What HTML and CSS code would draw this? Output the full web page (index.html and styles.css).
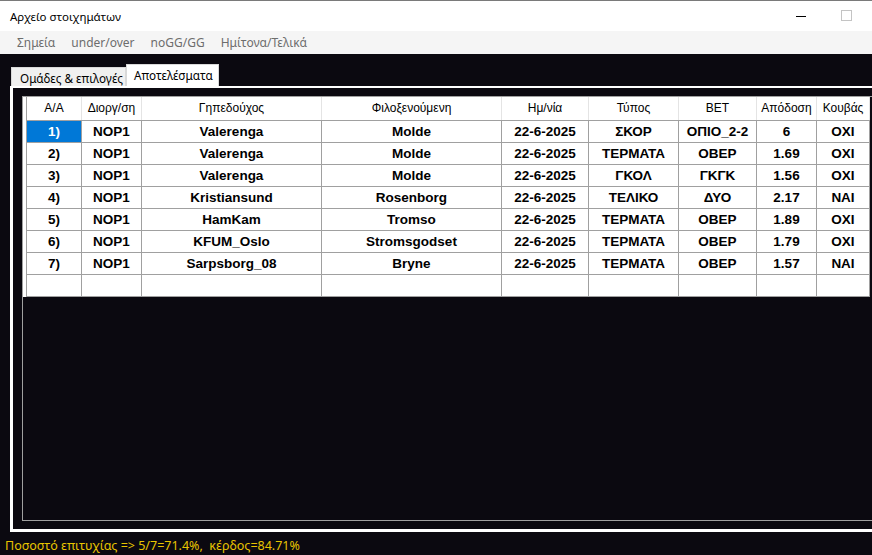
FILE: index.html
```html
<html>

<head>
    <meta http-equiv="Content-Type" content="text/html; charset=UTF-8">
    <title>Αρχείο στοιχημάτων</title>
    <link rel="stylesheet" href="styles.css">
</head>
<body>
    <div class="titlebar">
        <span class="title">Αρχείο στοιχημάτων</span>
        <span class="btn-min"></span>
        <span class="btn-max"></span>
    </div>
    <div class="menubar">
        <span class="menu-item">Σημεία</span>
        <span class="menu-item">under/over</span>
        <span class="menu-item">noGG/GG</span>
        <span class="menu-item">Ημίτονα/Τελικά</span>
    </div>
    <div class="client">
        <div class="tabs">
            <div class="tab">Ομάδες &amp; επιλογές</div>
            <div class="tab tab-active">Αποτελέσματα</div>
        </div>
        <div class="panel">
            <div class="grid">
                <table class="results">
                    <colgroup>
                        <col style="width:55px">
                        <col style="width:60px">
                        <col style="width:180px">
                        <col style="width:180px">
                        <col style="width:87px">
                        <col style="width:90px">
                        <col style="width:78px">
                        <col style="width:60px">
                        <col style="width:53px">
                    </colgroup>
                    <thead>
                        <tr>
                            <th>A/A</th>
                            <th>Διοργ/ση</th>
                            <th>Γηπεδούχος</th>
                            <th>Φιλοξενούμενη</th>
                            <th>Ημ/νία</th>
                            <th>Τύπος</th>
                            <th>BET</th>
                            <th>Απόδοση</th>
                            <th>Κουβάς</th>
                        </tr>
                    </thead>
                    <tbody>
                        <tr>
                            <td class="selected">1)</td><td>NOP1</td><td>Valerenga</td><td>Molde</td><td>22-6-2025</td><td>ΣΚΟΡ</td><td>ΟΠΙΟ_2-2</td><td>6</td><td>ΟΧΙ</td>
                        </tr>
                        <tr>
                            <td>2)</td><td>NOP1</td><td>Valerenga</td><td>Molde</td><td>22-6-2025</td><td>ΤΕΡΜΑΤΑ</td><td>ΟΒΕΡ</td><td>1.69</td><td>ΟΧΙ</td>
                        </tr>
                        <tr>
                            <td>3)</td><td>NOP1</td><td>Valerenga</td><td>Molde</td><td>22-6-2025</td><td>ΓΚΟΛ</td><td>ΓΚΓΚ</td><td>1.56</td><td>ΟΧΙ</td>
                        </tr>
                        <tr>
                            <td>4)</td><td>NOP1</td><td>Kristiansund</td><td>Rosenborg</td><td>22-6-2025</td><td>ΤΕΛΙΚΟ</td><td>ΔΥΟ</td><td>2.17</td><td>ΝΑΙ</td>
                        </tr>
                        <tr>
                            <td>5)</td><td>NOP1</td><td>HamKam</td><td>Tromso</td><td>22-6-2025</td><td>ΤΕΡΜΑΤΑ</td><td>ΟΒΕΡ</td><td>1.89</td><td>ΟΧΙ</td>
                        </tr>
                        <tr>
                            <td>6)</td><td>NOP1</td><td>KFUM_Oslo</td><td>Stromsgodset</td><td>22-6-2025</td><td>ΤΕΡΜΑΤΑ</td><td>ΟΒΕΡ</td><td>1.79</td><td>ΟΧΙ</td>
                        </tr>
                        <tr>
                            <td>7)</td><td>NOP1</td><td>Sarpsborg_08</td><td>Bryne</td><td>22-6-2025</td><td>ΤΕΡΜΑΤΑ</td><td>ΟΒΕΡ</td><td>1.57</td><td>ΝΑΙ</td>
                        </tr>
                        <tr>
                            <td></td><td></td><td></td><td></td><td></td><td></td><td></td><td></td><td></td>
                        </tr>
                    </tbody>
                </table>
            </div>
        </div>
        <div class="status">Ποσοστό επιτυχίας =&gt; 5/7=71.4%,&nbsp; κέρδος=84.71%</div>
    </div>
</body>
</html>
```

FILE: styles.css
```css
html,
body {
    margin: 0;
    padding: 0;
    width: 872px;
    height: 555px;
    overflow: hidden;
    background: #0b0910;
}

.titlebar {
    height: 30px;
    background: #fff;
    border-top: 1px solid #7a7a7a;
    display: flex;
    align-items: center;
    font-family: 'Noto Sans', sans-serif;
    font-size: 11.5px;
    color: #000;
}

.title {
    margin-left: 10px;
    flex: 1;
}

.btn-min {
    width: 10px;
    height: 1px;
    background: #000;
    margin-right: 35px;
}

.btn-max {
    width: 9px;
    height: 9px;
    border: 1px solid #c4c4c4;
    margin-right: 20px;
    margin-bottom: 2px;
}

.menubar {
    height: 23px;
    background: #f5f5f5;
    display: flex;
    align-items: center;
    padding-left: 9px;
    font-family: 'Noto Sans', sans-serif;
    font-size: 12px;
    color: #6d6d6d;
}

.menu-item {
    padding: 0 8px;
}

.client {
    padding-top: 10px;
    padding-left: 10px;
}

.tabs {
    display: flex;
    align-items: flex-end;
    height: 22px;
    font-family: 'Noto Sans', sans-serif;
    font-size: 11.7px;
    color: #000;
}

.tab {
    margin-left: 1px;
    width: 115px;
    height: 19px;
    line-height: 21px;
    padding-left: 8px;
    box-sizing: border-box;
    background: #f0f0f0;
    border: 1px solid #d9d9d9;
    border-bottom: none;
    white-space: nowrap;
    overflow: hidden;
}

.tab-active {
    margin-left: 0;
    width: 93px;
    height: 22px;
    line-height: 20px;
    padding-left: 7px;
    background: #fff;
}

.panel {
    width: 1000px;
    border-top: 2px solid #fff;
    border-left: 3px solid #fff;
    border-bottom: 3px solid #fff;
    padding: 8px 0 8px 9px;
}

.grid {
    height: 423px;
    border: 1px solid #a0a0a0;
    border-right: none;
}

.results {
    margin-left: 3px;
    box-shadow: -3px 0 0 #fff;
    border-collapse: collapse;
    table-layout: fixed;
    width: 843px;
    background: #fff;
    font-family: 'Liberation Sans', Arial, sans-serif;
    color: #000;
}

.results th {
    height: 23px;
    padding: 0;
    font-size: 12px;
    font-weight: normal;
    text-align: center;
    border-left: 1px solid #e4e4e4;
    border-right: 1px solid #e4e4e4;
    border-bottom: 1px solid #a0a0a0;
    white-space: nowrap;
    overflow: hidden;
}

.results th:first-child {
    border-left: 1px solid #a0a0a0;
}

.results td {
    height: 22px;
    padding: 0;
    font-size: 13.5px;
    font-weight: bold;
    text-align: center;
    border: 1px solid #a0a0a0;
    white-space: nowrap;
    overflow: hidden;
}

.results td.selected {
    background: #0078d7;
    color: #fff;
}

.status {
    padding-top: 4px;
    margin-left: -5px;
    line-height: 20px;
    font-family: 'Noto Sans', sans-serif;
    font-size: 12.5px;
    color: #e8c400;
    white-space: nowrap;
}
```
